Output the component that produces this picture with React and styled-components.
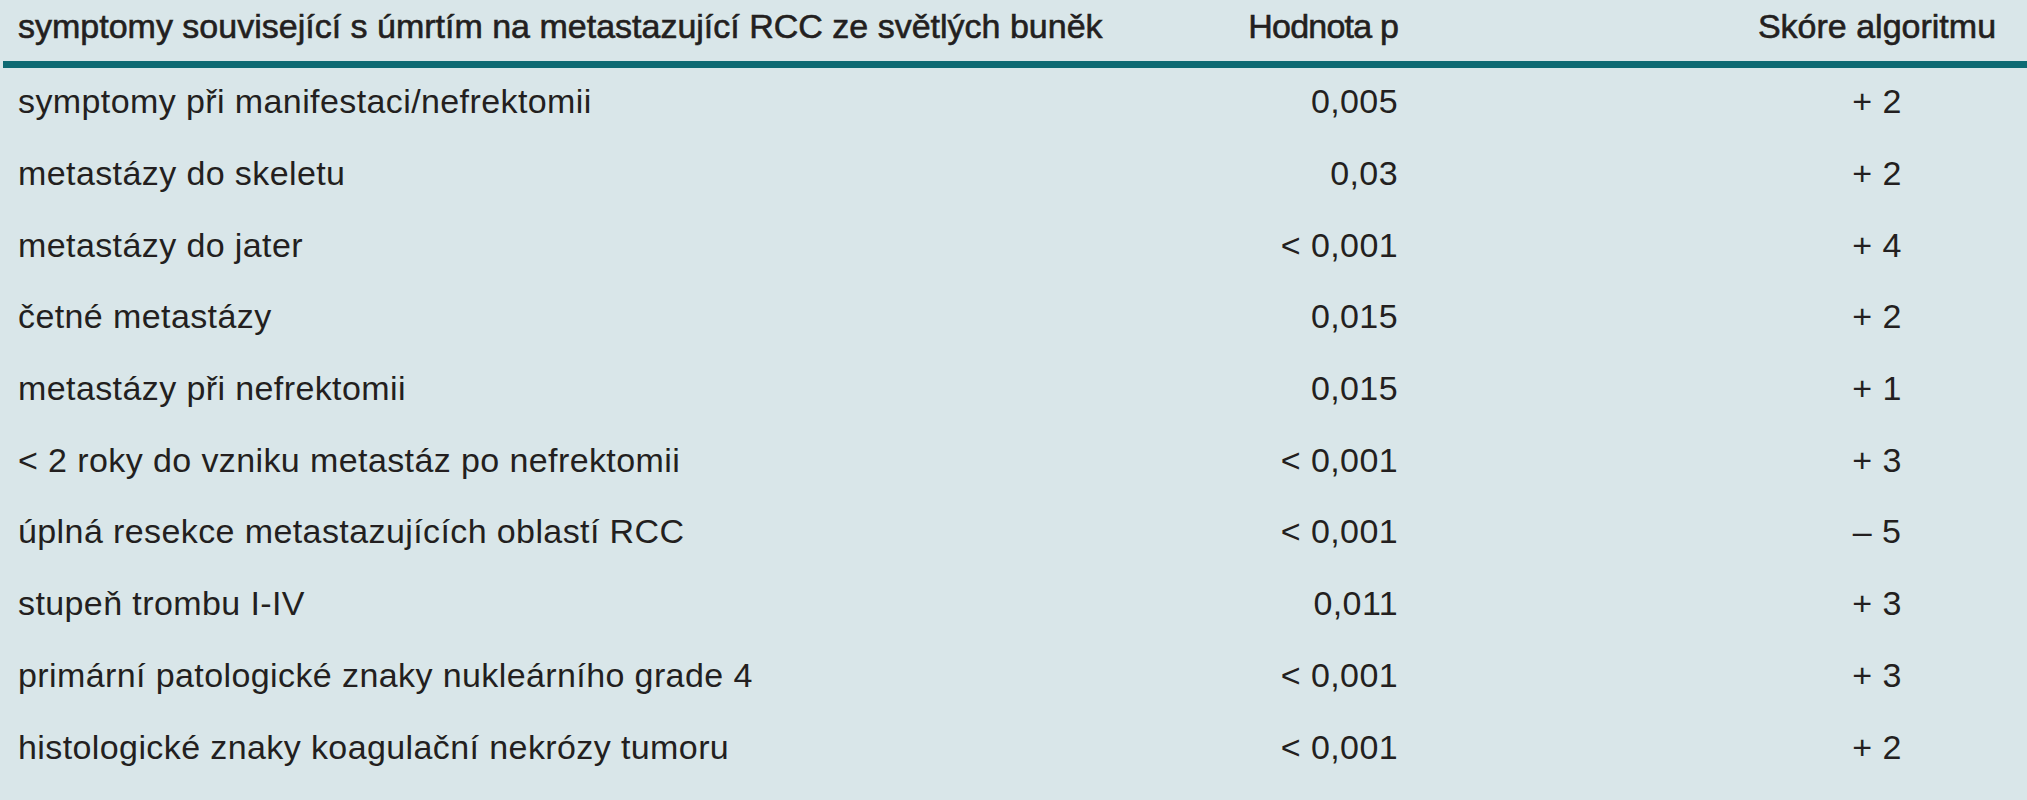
import React from "react";
import styled, { createGlobalStyle } from "styled-components";

const GlobalStyle = createGlobalStyle`
  html, body {
    margin: 0;
    padding: 0;
    background: #d9e6e9;
  }
  body {
    font-family: "Liberation Sans", Arial, sans-serif;
    color: #231f20;
  }
`;

const Table = styled.div`
  width: 2027px;
  height: 800px;
  box-sizing: border-box;
  padding-left: 3px;
  background: #d9e6e9;
  overflow: hidden;
`;

const Row = styled.div`
  display: grid;
  grid-template-columns: 1fr 300px 614px;
  align-items: center;
  box-sizing: border-box;
  height: ${(p) => (p.$head ? "68px" : "71.7px")};
  padding-bottom: ${(p) => (p.$head ? "9px" : "5px")};
  border-bottom: ${(p) => (p.$head ? "7px solid #0e6a73" : "none")};
`;

const Cell = styled.div`
  font-size: 34px;
  line-height: 1;
  letter-spacing: ${(p) => (p.$head ? "0" : "0.4px")};
  white-space: nowrap;
  -webkit-text-stroke: ${(p) => (p.$head ? "0.6px #231f20" : "0")};
`;

const Label = styled(Cell)`
  padding-left: 15px;
`;

const PValue = styled(Cell)`
  text-align: right;
  padding-right: 15px;
  letter-spacing: ${(p) => (p.$head ? "-0.8px" : "0.4px")};
`;

const Score = styled(Cell)`
  text-align: center;
  padding-left: 314px;
`;

const rows = [
  ["symptomy při manifestaci/nefrektomii", "0,005", "+ 2"],
  ["metastázy do skeletu", "0,03", "+ 2"],
  ["metastázy do jater", "< 0,001", "+ 4"],
  ["četné metastázy", "0,015", "+ 2"],
  ["metastázy při nefrektomii", "0,015", "+ 1"],
  ["< 2 roky do vzniku metastáz po nefrektomii", "< 0,001", "+ 3"],
  ["úplná resekce metastazujících oblastí RCC", "< 0,001", "– 5"],
  ["stupeň trombu I-IV", "0,011", "+ 3"],
  ["primární patologické znaky nukleárního grade 4", "< 0,001", "+ 3"],
  ["histologické znaky koagulační nekrózy tumoru", "< 0,001", "+ 2"],
];

export default function App() {
  return (
    <>
      <GlobalStyle />
      <Table>
        <Row $head>
          <Label $head>symptomy související s úmrtím na metastazující RCC ze světlých buněk</Label>
          <PValue $head>Hodnota p</PValue>
          <Score $head>Skóre algoritmu</Score>
        </Row>
        {rows.map(([label, p, score]) => (
          <Row key={label}>
            <Label>{label}</Label>
            <PValue>{p}</PValue>
            <Score>{score}</Score>
          </Row>
        ))}
      </Table>
    </>
  );
}
